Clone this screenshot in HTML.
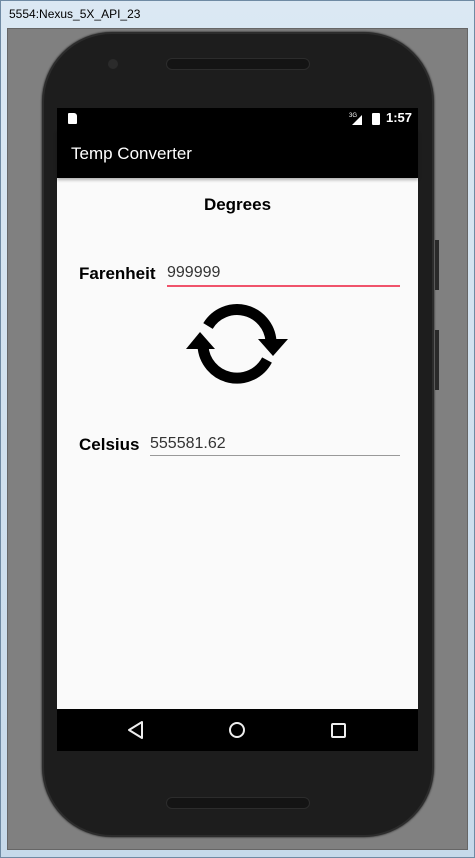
<!DOCTYPE html>
<html><head><style>
*{margin:0;padding:0;box-sizing:border-box}
body{width:475px;height:858px;overflow:hidden;background:#cfe0ee;font-family:"Liberation Sans",sans-serif;position:relative}
.a{position:absolute}
</style></head><body>
<div class="a" style="left:0;top:0;width:475px;height:858px;background:linear-gradient(#dbe8f3,#c6d9ea);border:1px solid #6f8aa3"></div>
<div class="a" style="left:9px;top:7px;font-size:12px;color:#000">5554:Nexus_5X_API_23</div>
<div class="a" style="left:7px;top:28px;width:461px;height:822px;background:#808080;border:1px solid #666"></div>
<div class="a" style="left:42px;top:32px;width:392px;height:805px;background:#1d1d1d;border-radius:70px;border:2px solid #2c2c2c;box-shadow:0 0 2px #111"></div>
<div class="a" style="left:435px;top:240px;width:4px;height:50px;background:#2a2a2a"></div>
<div class="a" style="left:435px;top:330px;width:4px;height:60px;background:#2a2a2a"></div>
<div class="a" style="left:108px;top:59px;width:10px;height:10px;border-radius:50%;background:#2b2b2b"></div>
<div class="a" style="left:166px;top:58px;width:144px;height:12px;border-radius:6px;background:#141414;border:1px solid #2c2c2c"></div>
<div class="a" style="left:166px;top:797px;width:144px;height:12px;border-radius:6px;background:#141414;border:1px solid #2c2c2c"></div>
<div class="a" style="left:57px;top:108px;width:361px;height:643px;background:#fafafa"></div>
<div class="a" style="left:57px;top:108px;width:361px;height:22px;background:#000"></div>
<div class="a" style="left:68px;top:113px;width:9px;height:11px;background:#fff;border-radius:1px 3px 1px 1px"></div>
<svg class="a" style="left:349px;top:111px" width="16" height="15"><text x="0" y="6" font-size="6" fill="#fff" font-family="Liberation Sans">3G</text><path d="M3 14 L13 14 L13 4 Z" fill="#fff"/></svg>
<div class="a" style="left:372px;top:113px;width:8px;height:12px;background:#fff;border-radius:1px"></div>
<div class="a" style="left:386px;top:110px;font-size:13px;color:#fff;font-weight:bold">1:57</div>
<div class="a" style="left:57px;top:130px;width:361px;height:48px;background:#000;box-shadow:0 2px 3px rgba(0,0,0,.3)"></div>
<div class="a" style="left:71px;top:144px;font-size:17px;color:#fff">Temp Converter</div>
<div class="a" style="left:57px;top:195px;width:361px;text-align:center;font-size:17px;font-weight:bold;color:#000">Degrees</div>
<div class="a" style="left:79px;top:264px;font-size:17px;font-weight:bold;color:#000">Farenheit</div>
<div class="a" style="left:167px;top:264px;font-size:16px;color:#333">999999</div>
<div class="a" style="left:167px;top:285px;width:233px;height:2px;background:#f0536b"></div>
<div class="a" style="left:79px;top:435px;font-size:17px;font-weight:bold;color:#000">Celsius</div>
<div class="a" style="left:150px;top:435px;font-size:16px;color:#333">555581.62</div>
<div class="a" style="left:150px;top:455px;width:250px;height:1px;background:#999"></div>
<svg class="a" style="left:0;top:0" width="475" height="858">
<path d="M208 326 A34 34 0 0 1 271 341" fill="none" stroke="#000" stroke-width="11"/>
<path d="M258 339 L288 339 L273 356 Z" fill="#000"/>
<path d="M203 346 A34 34 0 0 0 267 360" fill="none" stroke="#000" stroke-width="11"/>
<path d="M186 349 L215 349 L200 332 Z" fill="#000"/>
</svg>
<div class="a" style="left:57px;top:709px;width:361px;height:42px;background:#000"></div>
<svg class="a" style="left:57px;top:709px" width="361" height="42">
<path d="M85 13 L72 21 L85 29 Z" fill="none" stroke="#eee" stroke-width="2" stroke-linejoin="round"/>
<circle cx="180" cy="21" r="7" fill="none" stroke="#eee" stroke-width="2"/>
<rect x="275" y="15" width="13" height="13" fill="none" stroke="#eee" stroke-width="2" rx="1"/>
</svg>
</body></html>
